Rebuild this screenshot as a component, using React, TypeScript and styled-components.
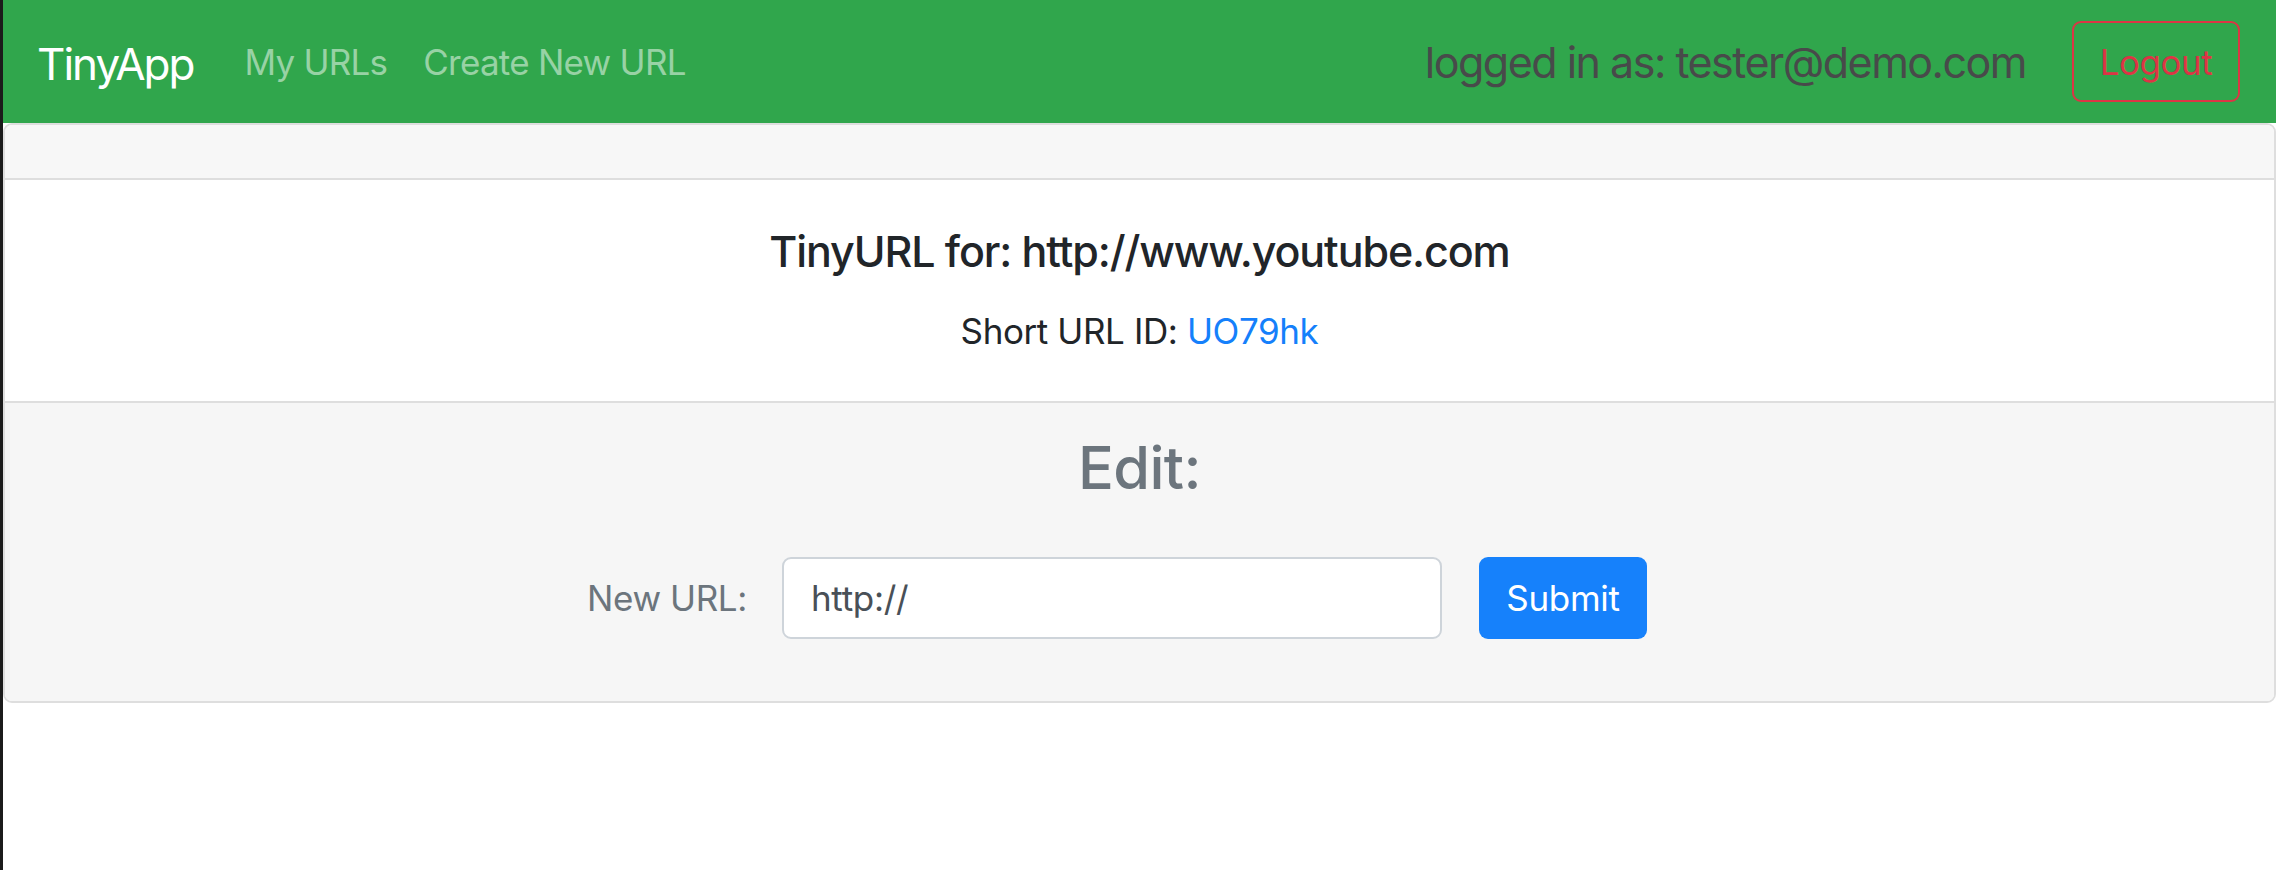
import React from "react";
import styled, { createGlobalStyle } from "styled-components";

const GlobalStyle = createGlobalStyle`
  html, body {
    margin: 0;
    padding: 0;
    background: #ffffff;
  }
  body {
    font-family: Inter, "Noto Sans", "Liberation Sans", sans-serif;
    color: #212529;
  }
  * { box-sizing: border-box; }
`;

const Page = styled.div`
  min-height: 100vh;
  border-left: 3px solid #1b1b1b;
`;

const NavBar = styled.nav`
  height: 123px;
  background: #30a64c;
  display: flex;
  align-items: center;
  padding: 0 36px 0 34px;
`;

const Brand = styled.a`
  font-size: 44px;
  color: #ffffff;
  text-decoration: none;
  margin-right: 33px;
  letter-spacing: -2px;
  padding-top: 4px;
`;

const NavLink = styled.a`
  font-size: 35px;
  color: rgb(152, 210, 165);
  text-decoration: none;
  padding: 0 18px;
  letter-spacing: -0.75px;
`;

const Spacer = styled.div`
  flex: 1;
`;

const LoggedIn = styled.span`
  font-size: 43px;
  color: #484a4a;
  letter-spacing: -1.5px;
  margin-right: 46px;
`;

const OutlineButton = styled.button`
  width: 168px;
  height: 81px;
  border: 2px solid #dc3545;
  border-radius: 9px;
  background: transparent;
  color: #dc3545;
  font-family: inherit;
  font-size: 35px;
  letter-spacing: -0.5px;
  padding: 0;
  cursor: pointer;
`;

const Card = styled.section`
  border: 2px solid #dedede;
  border-radius: 9px;
  overflow: hidden;
`;

const CardHeader = styled.div`
  height: 55px;
  background: #f7f7f7;
  border-bottom: 2px solid #dedede;
`;

const CardBody = styled.div`
  background: #ffffff;
  padding: 44px 28px 43px;
  text-align: center;
`;

const Title = styled.h5`
  margin: 0 0 26px;
  font-size: 43px;
  line-height: 54px;
  font-weight: 500;
  color: #212529;
  letter-spacing: -1.1px;
`;

const Text = styled.p`
  margin: 0;
  font-size: 35px;
  line-height: 54px;
  color: #212529;
  letter-spacing: -0.4px;
`;

const Link = styled.a`
  color: #1580fb;
  text-decoration: none;
`;

const CardFooter = styled.div`
  background: #f6f6f6;
  border-top: 2px solid #dedede;
  padding: 28px 28px 62px;
  text-align: center;
`;

const Heading = styled.h3`
  margin: 0 0 54px;
  font-size: 59.5px;
  line-height: 72px;
  font-weight: 500;
  color: #6c757d;
  letter-spacing: -0.6px;
`;

const Form = styled.form`
  display: flex;
  align-items: center;
  justify-content: center;
  padding-right: 45px;
`;

const Label = styled.label`
  font-size: 35px;
  color: #6c757d;
  margin-right: 35px;
  letter-spacing: -0.4px;
`;

const Input = styled.input`
  width: 660px;
  height: 82px;
  border: 2px solid #ced4da;
  border-radius: 9px;
  background: #ffffff;
  padding: 0 27px;
  font-family: inherit;
  font-size: 35px;
  color: #495057;
  letter-spacing: -0.3px;
  outline: none;
  margin-right: 37px;
`;

const SubmitButton = styled.button`
  width: 168px;
  height: 82px;
  border: none;
  border-radius: 9px;
  background: #1681fb;
  color: #ffffff;
  font-family: inherit;
  font-size: 35px;
  letter-spacing: -0.3px;
  padding: 0;
  cursor: pointer;
`;

export default function App() {
  return (
    <Page>
      <GlobalStyle />
      <NavBar>
        <Brand href="#">TinyApp</Brand>
        <NavLink href="#">My URLs</NavLink>
        <NavLink href="#">Create New URL</NavLink>
        <Spacer />
        <LoggedIn>logged in as: tester@demo.com</LoggedIn>
        <OutlineButton type="button">Logout</OutlineButton>
      </NavBar>
      <Card>
        <CardHeader />
        <CardBody>
          <Title>TinyURL for: http://www.youtube.com</Title>
          <Text>
            Short URL ID: <Link href="#">UO79hk</Link>
          </Text>
        </CardBody>
        <CardFooter>
          <Heading>Edit:</Heading>
          <Form onSubmit={(e) => e.preventDefault()}>
            <Label htmlFor="newurl">New URL:</Label>
            <Input id="newurl" type="text" defaultValue="http://" />
            <SubmitButton type="submit">Submit</SubmitButton>
          </Form>
        </CardFooter>
      </Card>
    </Page>
  );
}
